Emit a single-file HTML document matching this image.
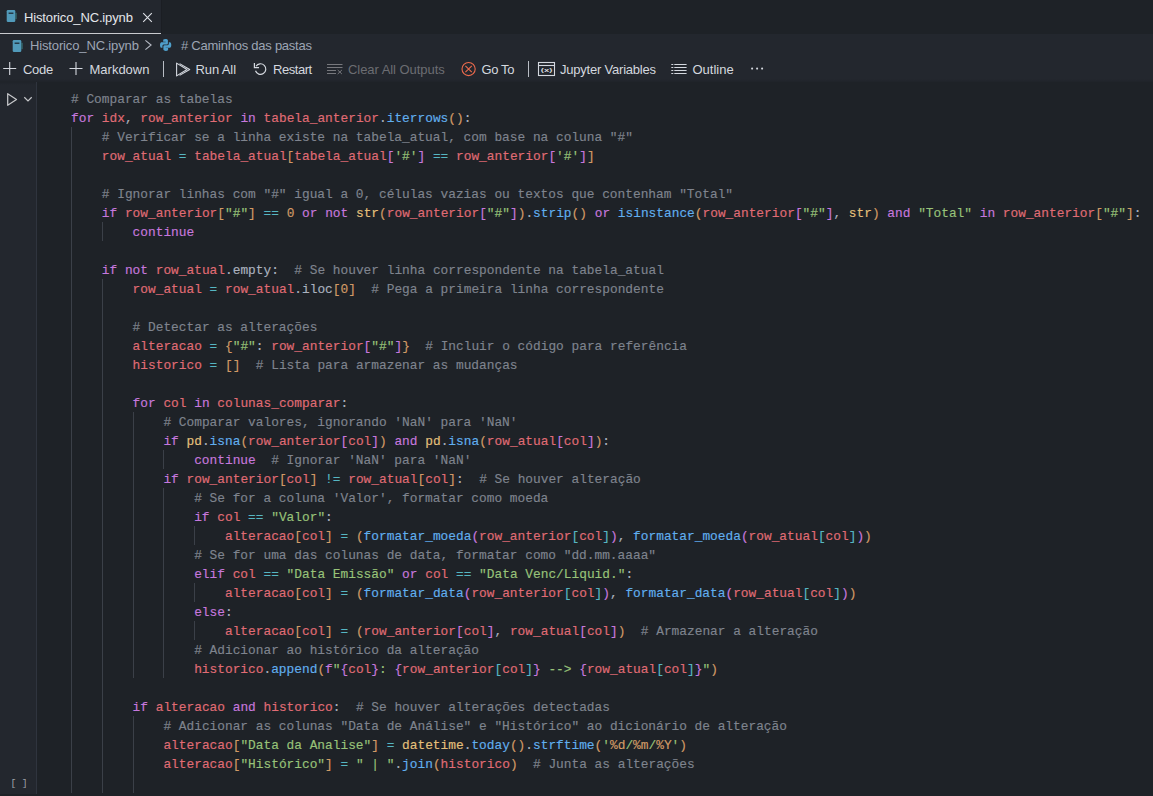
<!DOCTYPE html>
<html lang="pt-BR">
<head>
<meta charset="utf-8">
<title>Historico_NC.ipynb</title>
<style>
*{box-sizing:border-box;margin:0;padding:0}
html,body{width:1153px;height:796px;overflow:hidden;background:#1e2227}
body{position:relative;font-family:"Liberation Sans",sans-serif;font-size:13px;color:#abb2bf}
.abs{position:absolute}
#tabs{left:0;top:0;width:1153px;height:34px;background:#1e2227}
#tab{left:0;top:0;width:161px;height:34px;background:#23272e;border-bottom:1px solid #c8cace}
#tabedge{left:161px;top:0;width:1px;height:34px;background:#1b1e23}
#tab .lbl{left:24px;top:10px;color:#e3e6ea;white-space:nowrap;line-height:16px}
#crumbs{left:0;top:34px;width:1153px;height:22px;background:#23272e}
#crumbs .t{top:4px;line-height:16px;color:#9da5b4;white-space:nowrap}
#toolbar{left:0;top:56px;width:1153px;height:26px;background:#23272e}
#toolbar .t{top:6px;line-height:16px;color:#d4d8df;white-space:nowrap}
#toolbar .t.dis{color:#6c6d72}
#toolbar .sep{top:5px;width:1px;height:16px;background:#b9bdc5}
#gutter{left:0;top:82px;width:36px;height:712px;background:#23272e}
#cell{left:36px;top:82px;width:1117px;height:712px;background:#1e2227;border-left:1px solid #2f343e}
#code{left:71px;top:89.5px;font-family:"Liberation Mono",monospace;font-size:12.83px;line-height:19px;color:#abb2bf}
.ln{height:19px;white-space:pre;-webkit-text-stroke:0.15px currentColor}
.c{color:#7f848e}.k{color:#c678dd}.v{color:#e06c75}.f{color:#61afef}.s{color:#98c379}.n{color:#d19a66}
.t{color:#e5c07b}.o{color:#56b6c2}.p{color:#abb2bf}.b1{color:#d19a66}.b2{color:#c678dd}.b3{color:#56b6c2}
.g{position:absolute;width:1px;background:#3b4048;display:block}
#exec{left:10.5px;top:777px;font-family:"Liberation Mono",monospace;font-size:9.7px;letter-spacing:-0.15px;line-height:14px;color:#9fa2a9;white-space:pre}
svg{position:absolute;overflow:visible}
</style>
</head>
<body>
<div id="tabs" class="abs">
  <div id="tab" class="abs">
    <svg style="left:6px;top:10px" width="11" height="12" viewBox="0 0 11 12"><rect x="0.7" y="0" width="8.600" height="12" rx="1.300" fill="#519aba"/><rect x="2.600" y="2.600" width="4.800" height="1.200" fill="#1b252d"/><rect x="9.300" y="2.800" width="1.500" height="6.400" fill="#3f8f94" opacity="0.55"/></svg>
    <div class="abs lbl" style="letter-spacing:-0.14px">Historico_NC.ipynb</div>
    <svg style="left:143px;top:12.6px" width="9" height="9" viewBox="0 0 9 9"><path d="M0.200 0.200 L8.800 8.800 M8.800 0.200 L0.200 8.800" stroke="#dfe2e7" stroke-width="1.100" fill="none"/></svg>
  </div>
</div>
<div id="tabedge" class="abs"></div>
<div id="crumbs" class="abs">
  <svg style="left:11.8px;top:5.500px" width="11" height="12" viewBox="0 0 11 12"><rect x="0.7" y="0" width="8.600" height="12" rx="1.300" fill="#519aba"/><rect x="2.600" y="2.600" width="4.800" height="1.200" fill="#1b252d"/><rect x="9.300" y="2.800" width="1.500" height="6.400" fill="#3f8f94" opacity="0.55"/></svg>
  <div class="abs t" style="left:30px;letter-spacing:-0.14px">Historico_NC.ipynb</div>
  <svg style="left:144.5px;top:6px" width="7" height="10" viewBox="0 0 7 10"><path d="M0.400 0.400 L6.100 5 L0.400 9.600" stroke="#b5bac4" stroke-width="1.100" fill="none"/></svg>
  <svg style="left:159.6px;top:4.9px" width="11.3" height="11.9" viewBox="0 0 11 11" preserveAspectRatio="none"><path d="M5.400 0C3 0 3.100 1.100 3.100 1.100V2.600H5.500V3H1.600S0 2.800 0 5.500s1.400 2.600 1.400 2.600h1V6.600s0-1.400 1.400-1.400h2.600s1.300 0 1.300-1.300V1.500S7.900 0 5.400 0z" fill="#4f9fcb"/><path d="M5.600 11c2.400 0 2.300-1.100 2.300-1.100V8.400H5.500V8h3.900S11 8.200 11 5.500 9.600 2.900 9.600 2.900h-1v1.500s0 1.400-1.400 1.400H4.600s-1.300 0-1.300 1.300v2.400S3.100 11 5.600 11z" fill="#4f9fcb"/></svg>
  <div class="abs t" style="left:181px;letter-spacing:-0.245px"># Caminhos das pastas</div>
</div>
<div id="toolbar" class="abs">
  <svg style="left:0;top:0" width="780" height="26" viewBox="0 0 780 26" fill="none" stroke="#d4d8df" stroke-width="1.100">
    <path d="M9.700 6V19M3.200 12.500H16.200"/>
    <path d="M76 6V19M69.500 12.500H82.500"/>
    <path d="M176.600 7.100V19.900L187 13.500Z" stroke-linejoin="round"/>
    <path d="M179.600 7.600L189.700 13.500L179.600 19.400" stroke-linejoin="round"/>
    <path d="M256 10.300A5.300 5.300 0 1 1 255.500 14.800" stroke-width="1.200"/>
    <path d="M254.400 7V11.700H259" stroke-width="1.200"/>
    <g stroke="#77787d" stroke-width="1"><path d="M327 8.500H342.500M327 11.500H342.500M327 14.500H336M327 17.500H336"/><path d="M337.700 14L341.900 18M341.900 14L337.700 18"/></g>
    <g stroke="#ec6a4c" stroke-width="1.100"><circle cx="468.600" cy="13.050" r="6.600"/><path d="M465.400 9.900L471.800 16.200M471.800 9.900L465.400 16.200"/></g>
    <rect x="538.500" y="6.500" width="16" height="13"/><path d="M538.500 9.500H554.500"/>
    <g stroke-width="1"><path d="M671.300 8.500H673.300M674.300 8.500H686.600M671.300 11.500H673.300M674.300 11.500H686.600M671.300 14.500H673.300M674.300 14.500H686.600M671.300 17.500H673.300M674.300 17.500H686.600"/></g>
    <g fill="#d4d8df" stroke="none"><circle cx="752.100" cy="12.600" r="1.050"/><circle cx="757.100" cy="12.600" r="1.050"/><circle cx="762.100" cy="12.600" r="1.050"/></g>
    <text x="540.800" y="16.100" font-family="Liberation Sans, sans-serif" font-size="5.800" font-weight="bold" fill="#d4d8df" stroke="none" textLength="11.600" lengthAdjust="spacingAndGlyphs">(x)</text>
  </svg>
  <div class="abs t" style="left:23px;letter-spacing:-0.27px">Code</div>
  <div class="abs t" style="left:89.500px">Markdown</div>
  <div class="abs sep" style="left:163px"></div>
  <div class="abs t" style="left:195.500px;letter-spacing:-0.11px">Run All</div>
  <div class="abs t" style="left:273px;letter-spacing:-0.46px">Restart</div>
  <div class="abs t dis" style="left:348px;letter-spacing:-0.05px">Clear All Outputs</div>
  <div class="abs t" style="left:481.500px;letter-spacing:-0.39px">Go To</div>
  <div class="abs sep" style="left:528px"></div>
  <div class="abs t" style="left:560px;letter-spacing:-0.216px">Jupyter Variables</div>
  <div class="abs t" style="left:692.500px">Outline</div>
</div>
<div id="gutter" class="abs"></div>
<div class="abs" style="left:0;top:79px;width:1153px;height:3px;background:linear-gradient(rgba(0,0,0,0),rgba(0,0,0,0.10))"></div>
<div class="abs" style="left:0;top:82px;width:36px;height:3px;background:linear-gradient(rgba(0,0,0,0.10),rgba(0,0,0,0))"></div>
<div id="cell" class="abs"></div>
<svg style="left:6.500px;top:93px" width="11" height="13" viewBox="0 0 11 13"><path d="M0.700 0.700V12.300L9.500 6.500Z" stroke="#c6c7ca" stroke-width="1.250" fill="none" stroke-linejoin="round"/></svg>
<svg style="left:24px;top:97px" width="8" height="5" viewBox="0 0 8 5"><path d="M0.300 0.300L4 3.900L7.700 0.300" stroke="#c6c7ca" stroke-width="1.200" fill="none"/></svg>
<i class="g" style="left:71px;top:127px;height:666px"></i>
<i class="g" style="left:102px;top:222px;height:19px"></i>
<i class="g" style="left:102px;top:279px;height:514px"></i>
<i class="g" style="left:133px;top:412px;height:266px"></i>
<i class="g" style="left:133px;top:716px;height:77px"></i>
<i class="g" style="left:163px;top:450px;height:19px"></i>
<i class="g" style="left:163px;top:488px;height:190px"></i>
<i class="g" style="left:194px;top:526px;height:19px"></i>
<i class="g" style="left:194px;top:583px;height:19px"></i>
<i class="g" style="left:194px;top:621px;height:19px"></i>
<div id="code" class="abs">
<div class="ln"><span class="c"># Comparar as tabelas</span></div>
<div class="ln"><span class="k">for</span> <span class="v">idx</span><span class="p">,</span> <span class="v">row_anterior</span> <span class="k">in</span> <span class="v">tabela_anterior</span><span class="p">.</span><span class="f">iterrows</span><span class="b1">(</span><span class="b1">)</span><span class="p">:</span></div>
<div class="ln">    <span class="c"># Verificar se a linha existe na tabela_atual, com base na coluna "#"</span></div>
<div class="ln">    <span class="v">row_atual</span> <span class="o">=</span> <span class="v">tabela_atual</span><span class="b1">[</span><span class="v">tabela_atual</span><span class="b2">[</span><span class="s">'#'</span><span class="b2">]</span> <span class="o">==</span> <span class="v">row_anterior</span><span class="b2">[</span><span class="s">'#'</span><span class="b2">]</span><span class="b1">]</span></div>
<div class="ln"></div>
<div class="ln">    <span class="c"># Ignorar linhas com "#" igual a 0, células vazias ou textos que contenham "Total"</span></div>
<div class="ln">    <span class="k">if</span> <span class="v">row_anterior</span><span class="b1">[</span><span class="s">"#"</span><span class="b1">]</span> <span class="o">==</span> <span class="n">0</span> <span class="k">or</span> <span class="k">not</span> <span class="t">str</span><span class="b1">(</span><span class="v">row_anterior</span><span class="b2">[</span><span class="s">"#"</span><span class="b2">]</span><span class="b1">)</span><span class="p">.</span><span class="f">strip</span><span class="b1">(</span><span class="b1">)</span> <span class="k">or</span> <span class="f">isinstance</span><span class="b1">(</span><span class="v">row_anterior</span><span class="b2">[</span><span class="s">"#"</span><span class="b2">]</span><span class="p">,</span> <span class="t">str</span><span class="b1">)</span> <span class="k">and</span> <span class="s">"Total"</span> <span class="k">in</span> <span class="v">row_anterior</span><span class="b1">[</span><span class="s">"#"</span><span class="b1">]</span><span class="p">:</span></div>
<div class="ln">        <span class="k">continue</span></div>
<div class="ln"></div>
<div class="ln">    <span class="k">if</span> <span class="k">not</span> <span class="v">row_atual</span><span class="p">.</span><span class="p">empty</span><span class="p">:</span>  <span class="c"># Se houver linha correspondente na tabela_atual</span></div>
<div class="ln">        <span class="v">row_atual</span> <span class="o">=</span> <span class="v">row_atual</span><span class="p">.</span><span class="p">iloc</span><span class="b1">[</span><span class="n">0</span><span class="b1">]</span>  <span class="c"># Pega a primeira linha correspondente</span></div>
<div class="ln"></div>
<div class="ln">        <span class="c"># Detectar as alterações</span></div>
<div class="ln">        <span class="v">alteracao</span> <span class="o">=</span> <span class="b1">{</span><span class="s">"#"</span><span class="p">:</span> <span class="v">row_anterior</span><span class="b2">[</span><span class="s">"#"</span><span class="b2">]</span><span class="b1">}</span>  <span class="c"># Incluir o código para referência</span></div>
<div class="ln">        <span class="v">historico</span> <span class="o">=</span> <span class="b1">[</span><span class="b1">]</span>  <span class="c"># Lista para armazenar as mudanças</span></div>
<div class="ln"></div>
<div class="ln">        <span class="k">for</span> <span class="v">col</span> <span class="k">in</span> <span class="v">colunas_comparar</span><span class="p">:</span></div>
<div class="ln">            <span class="c"># Comparar valores, ignorando 'NaN' para 'NaN'</span></div>
<div class="ln">            <span class="k">if</span> <span class="t">pd</span><span class="p">.</span><span class="f">isna</span><span class="b1">(</span><span class="v">row_anterior</span><span class="b2">[</span><span class="v">col</span><span class="b2">]</span><span class="b1">)</span> <span class="k">and</span> <span class="t">pd</span><span class="p">.</span><span class="f">isna</span><span class="b1">(</span><span class="v">row_atual</span><span class="b2">[</span><span class="v">col</span><span class="b2">]</span><span class="b1">)</span><span class="p">:</span></div>
<div class="ln">                <span class="k">continue</span>  <span class="c"># Ignorar 'NaN' para 'NaN'</span></div>
<div class="ln">            <span class="k">if</span> <span class="v">row_anterior</span><span class="b1">[</span><span class="v">col</span><span class="b1">]</span> <span class="o">!=</span> <span class="v">row_atual</span><span class="b1">[</span><span class="v">col</span><span class="b1">]</span><span class="p">:</span>  <span class="c"># Se houver alteração</span></div>
<div class="ln">                <span class="c"># Se for a coluna 'Valor', formatar como moeda</span></div>
<div class="ln">                <span class="k">if</span> <span class="v">col</span> <span class="o">==</span> <span class="s">"Valor"</span><span class="p">:</span></div>
<div class="ln">                    <span class="v">alteracao</span><span class="b1">[</span><span class="v">col</span><span class="b1">]</span> <span class="o">=</span> <span class="b1">(</span><span class="f">formatar_moeda</span><span class="b2">(</span><span class="v">row_anterior</span><span class="b3">[</span><span class="v">col</span><span class="b3">]</span><span class="b2">)</span><span class="p">,</span> <span class="f">formatar_moeda</span><span class="b2">(</span><span class="v">row_atual</span><span class="b3">[</span><span class="v">col</span><span class="b3">]</span><span class="b2">)</span><span class="b1">)</span></div>
<div class="ln">                <span class="c"># Se for uma das colunas de data, formatar como "dd.mm.aaaa"</span></div>
<div class="ln">                <span class="k">elif</span> <span class="v">col</span> <span class="o">==</span> <span class="s">"Data Emissão"</span> <span class="k">or</span> <span class="v">col</span> <span class="o">==</span> <span class="s">"Data Venc/Liquid."</span><span class="p">:</span></div>
<div class="ln">                    <span class="v">alteracao</span><span class="b1">[</span><span class="v">col</span><span class="b1">]</span> <span class="o">=</span> <span class="b1">(</span><span class="f">formatar_data</span><span class="b2">(</span><span class="v">row_anterior</span><span class="b3">[</span><span class="v">col</span><span class="b3">]</span><span class="b2">)</span><span class="p">,</span> <span class="f">formatar_data</span><span class="b2">(</span><span class="v">row_atual</span><span class="b3">[</span><span class="v">col</span><span class="b3">]</span><span class="b2">)</span><span class="b1">)</span></div>
<div class="ln">                <span class="k">else</span><span class="p">:</span></div>
<div class="ln">                    <span class="v">alteracao</span><span class="b1">[</span><span class="v">col</span><span class="b1">]</span> <span class="o">=</span> <span class="b1">(</span><span class="v">row_anterior</span><span class="b2">[</span><span class="v">col</span><span class="b2">]</span><span class="p">,</span> <span class="v">row_atual</span><span class="b2">[</span><span class="v">col</span><span class="b2">]</span><span class="b1">)</span>  <span class="c"># Armazenar a alteração</span></div>
<div class="ln">                <span class="c"># Adicionar ao histórico da alteração</span></div>
<div class="ln">                <span class="v">historico</span><span class="p">.</span><span class="f">append</span><span class="b1">(</span><span class="k">f</span><span class="s">"</span><span class="b2">{</span><span class="v">col</span><span class="b2">}</span><span class="s">: </span><span class="b2">{</span><span class="v">row_anterior</span><span class="b3">[</span><span class="v">col</span><span class="b3">]</span><span class="b2">}</span><span class="s"> --&gt; </span><span class="b2">{</span><span class="v">row_atual</span><span class="b3">[</span><span class="v">col</span><span class="b3">]</span><span class="b2">}</span><span class="s">"</span><span class="b1">)</span></div>
<div class="ln"></div>
<div class="ln">        <span class="k">if</span> <span class="v">alteracao</span> <span class="k">and</span> <span class="v">historico</span><span class="p">:</span>  <span class="c"># Se houver alterações detectadas</span></div>
<div class="ln">            <span class="c"># Adicionar as colunas "Data de Análise" e "Histórico" ao dicionário de alteração</span></div>
<div class="ln">            <span class="v">alteracao</span><span class="b1">[</span><span class="s">"Data da Analise"</span><span class="b1">]</span> <span class="o">=</span> <span class="t">datetime</span><span class="p">.</span><span class="f">today</span><span class="b1">(</span><span class="b1">)</span><span class="p">.</span><span class="f">strftime</span><span class="b1">(</span><span class="s">'</span><span class="n">%d</span><span class="s">/</span><span class="n">%m</span><span class="s">/</span><span class="n">%Y</span><span class="s">'</span><span class="b1">)</span></div>
<div class="ln">            <span class="v">alteracao</span><span class="b1">[</span><span class="s">"Histórico"</span><span class="b1">]</span> <span class="o">=</span> <span class="s">" | "</span><span class="p">.</span><span class="f">join</span><span class="b1">(</span><span class="v">historico</span><span class="b1">)</span>  <span class="c"># Junta as alterações</span></div>
<div class="ln"></div>
</div>
<div id="exec" class="abs">[ ]</div>
</body>
</html>
